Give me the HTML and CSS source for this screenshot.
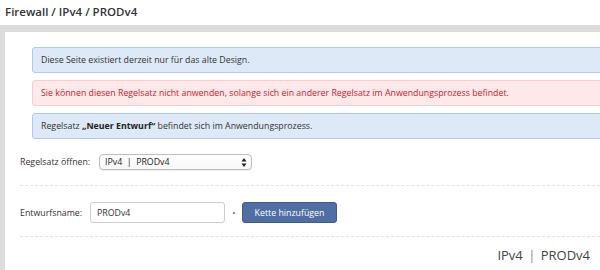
FILE: index.html
```html
<!DOCTYPE html>
<html lang="de">
<head>
    <meta charset="UTF-8">
    <meta name="viewport" content="width=device-width, initial-scale=1.0">
    <title>Firewall / IPv4 / PRODv4</title>
    <link rel="stylesheet" href="styles.css">
</head>
<body>
    <div class="page-header">
        <h1 class="page-title">Firewall / IPv4 / PRODv4</h1>
    </div>
    <div class="main">
        <div class="panel">
            <div class="alerts">
                <div class="alert alert-info">Diese Seite existiert derzeit nur für das alte Design.</div>
                <div class="alert alert-danger">Sie können diesen Regelsatz nicht anwenden, solange sich ein anderer Regelsatz im Anwendungsprozess befindet.</div>
                <div class="alert alert-info">Regelsatz <b>„Neuer Entwurf“</b> befindet sich im Anwendungsprozess.</div>
            </div>

            <div class="form-row form-row-open">
                <label class="form-label" for="ruleset">Regelsatz öffnen:</label>
                <div class="select-wrap">
                    <select id="ruleset" class="select">
                        <option>IPv4 &nbsp;|&nbsp; PRODv4</option>
                    </select>
                    <svg class="select-arrow" width="6" height="9" viewBox="0 0 6 9">
                        <path d="M3 0 L5.5 3.5 H0.5 Z M3 9 L5.5 5.5 H0.5 Z" fill="#222"/>
                    </svg>
                </div>
            </div>

            <div class="form-row form-row-draft">
                <label class="form-label" for="draftName">Entwurfsname:</label>
                <input type="text" id="draftName" class="text-input" value="PRODv4">
                <span class="dot"></span>
                <button type="button" class="btn-primary">Kette hinzufügen</button>
            </div>

            <div class="ruleset-name">IPv4 <span class="sep">|</span> PRODv4</div>
        </div>
    </div>
</body>
</html>
```

FILE: styles.css
```css
html, body {
    margin: 0;
    padding: 0;
    overflow: hidden;
}
body {
    width: 600px;
    height: 270px;
    background: #fff;
    font-family: "Open Sans", "Liberation Sans", Arial, sans-serif;
    color: #333;
}
.page-header {
    height: 25px;
    padding-left: 5px;
    background: #fff;
}
.page-title {
    margin: 0;
    font-size: 11.5px;
    font-weight: 600;
    line-height: 23px;
    color: #333;
}
.main {
    background: #dcdcdc;
    padding: 7px 0 0 5px;
    height: 238px;
}
.panel {
    background: #fff;
    height: 100%;
    padding: 15px 0 0 15px;
    box-sizing: border-box;
    overflow: hidden;
}
.alerts {
    display: flex;
    flex-direction: column;
    gap: 7px;
    margin: 0 -20px 0 12px;
}
.alert {
    padding: 0 8px;
    height: 26px;
    line-height: 24px;
    font-size: 8.8px;
    border: 1px solid;
    border-radius: 3px;
    box-sizing: border-box;
    white-space: nowrap;
}
.alert b {
    font-weight: 700;
    color: #222;
}
.alert-info {
    background: #dde9f6;
    border-color: #b3c8e6;
    color: #333;
}
.alert-danger {
    background: #fde8ea;
    border-color: #f7cdd2;
    color: #c8232c;
}
.form-row {
    display: flex;
    align-items: center;
    border-bottom: 1px dashed #e4e4e4;
    font-size: 8.8px;
}
.form-row-open {
    height: 46px;
}
.form-row-draft {
    height: 51px;
    padding-top: 3px;
    box-sizing: border-box;
}
.form-label {
    color: #333;
}
.form-row-open .form-label {
    width: 79px;
}
.form-row-draft .form-label {
    width: 70px;
}
.select-wrap {
    position: relative;
    width: 153px;
    height: 16px;
}
.select {
    appearance: none;
    -webkit-appearance: none;
    width: 100%;
    height: 100%;
    margin: 0;
    padding: 0 0 0 5px;
    border: 1px solid #bdbdbd;
    border-radius: 4px;
    background: linear-gradient(#fff, #f6f6f6);
    font-family: inherit;
    font-size: 8.8px;
    color: #222;
    box-shadow: 0 1px 1px rgba(0,0,0,0.08);
}
.select-arrow {
    position: absolute;
    right: 5px;
    top: 4px;
}
.text-input {
    width: 135px;
    height: 21px;
    box-sizing: border-box;
    margin: 0;
    padding: 0 6px;
    border: 1px solid #ccc;
    border-radius: 3px;
    font-family: inherit;
    font-size: 8.8px;
    color: #333;
}
.dot {
    width: 2px;
    height: 2px;
    border-radius: 50%;
    background: #666;
    margin: 0 7px 0 8px;
}
.btn-primary {
    width: 95px;
    height: 21px;
    padding: 0;
    border: 1px solid #3e5b8a;
    border-radius: 3px;
    background: #4e6ea4;
    color: #fff;
    font-family: inherit;
    font-size: 8.8px;
}
.ruleset-name {
    text-align: right;
    margin-right: 10px;
    padding-top: 9px;
    font-size: 13px;
    color: #444;
}
.ruleset-name .sep {
    color: #888;
    margin: 0 2px;
}
```
